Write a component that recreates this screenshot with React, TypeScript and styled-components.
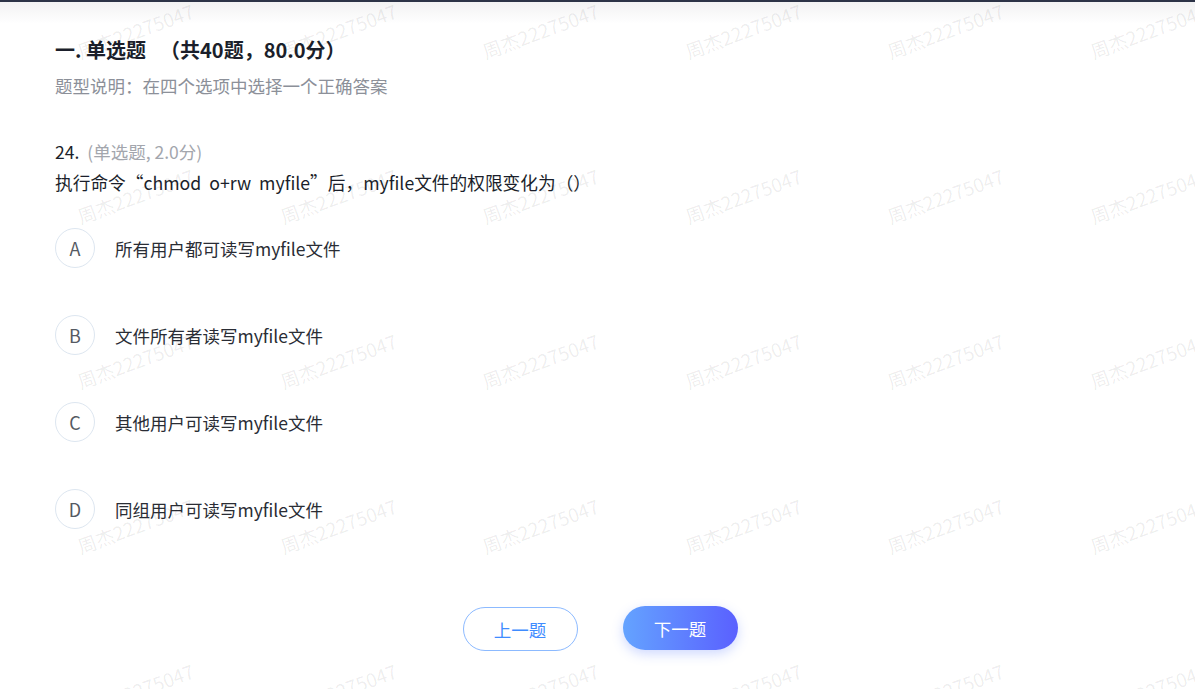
import React from 'react';
import styled, { createGlobalStyle } from 'styled-components';

const GlobalStyle = createGlobalStyle`
    html, body {
        margin: 0;
        padding: 0;
        background: #ffffff;
        font-family: "Noto Sans CJK SC", "Noto Sans", sans-serif;
    }
`;

const Page = styled.div`
    position: relative;
    width: 1195px;
    height: 689px;
    overflow: hidden;
    background: #ffffff;
`;

const TopBar = styled.div`
    height: 2px;
    background: #2c3347;
`;

const TopShade = styled.div`
    height: 22px;
    background: linear-gradient(#f2f2f3, #ffffff);
`;

const Content = styled.main`
    display: flex;
    flex-direction: column;
    padding: 11px 55px 0;
`;

const SectionTitle = styled.h2`
    margin: 0;
    font-size: 20px;
    font-weight: 700;
    line-height: 30px;
    color: #1b1f2b;

    .count {
        margin-left: 14px;
    }
`;

const SectionNote = styled.p`
    margin: 6px 0 0;
    font-size: 17.5px;
    line-height: 30px;
    color: #8c9099;
`;

const QuestionHead = styled.div`
    margin-top: 36px;
    font-size: 17.5px;
    line-height: 30px;
    color: #1b1f2b;

    .meta {
        margin-left: 8px;
        color: #a3a6ad;
    }
`;

const QuestionText = styled.div`
    font-size: 17.7px;
    line-height: 30px;
    color: #1b1f2b;
`;

const Options = styled.ul`
    list-style: none;
    margin: 31px 0 0;
    padding: 0;
    display: flex;
    flex-direction: column;
    gap: 47px;
`;

const OptionRow = styled.li`
    display: flex;
    align-items: center;
    gap: 20px;
    height: 40px;
    font-size: 17.5px;
    color: #2a2d35;
`;

const Letter = styled.span`
    box-sizing: border-box;
    width: 40px;
    height: 40px;
    border-radius: 50%;
    border: 1px solid #dde6f0;
    display: flex;
    align-items: center;
    justify-content: center;
    font-size: 18px;
    color: #555a63;
`;

const Footer = styled.div`
    display: flex;
    justify-content: center;
    gap: 45px;
    margin-top: 78px;
    padding-left: 5px;
`;

const NavButton = styled.button<{ $primary?: boolean }>`
    box-sizing: border-box;
    width: 115px;
    height: 44px;
    border-radius: 22px;
    font-family: inherit;
    font-size: 17.5px;
    cursor: pointer;
    border: ${({ $primary }) => ($primary ? 'none' : '1px solid #8cbaff')};
    color: ${({ $primary }) => ($primary ? '#ffffff' : '#3f8cff')};
    background: ${({ $primary }) =>
        $primary ? 'linear-gradient(90deg, #64a3ff, #5a60ff)' : '#ffffff'};
    box-shadow: ${({ $primary }) =>
        $primary ? '0 4px 12px rgba(96, 130, 255, 0.3)' : 'none'};
    transform: ${({ $primary }) => ($primary ? 'translateY(-1px)' : 'none')};
`;

const WatermarkLayer = styled.div`
    position: absolute;
    top: -52px;
    left: 34px;
    display: grid;
    grid-template-columns: repeat(6, 202.5px);
    grid-auto-rows: 165px;
    pointer-events: none;
`;

const Watermark = styled.span`
    display: flex;
    align-items: center;
    justify-content: center;
    font-family: "Noto Sans CJK SC", "Noto Sans", sans-serif;
    font-size: 19px;
    color: rgba(0, 0, 0, 0.075);
    white-space: nowrap;
    transform: rotate(-20deg);
`;

const options = [
    { key: 'A', text: '所有用户都可读写myfile文件' },
    { key: 'B', text: '文件所有者读写myfile文件' },
    { key: 'C', text: '其他用户可读写myfile文件' },
    { key: 'D', text: '同组用户可读写myfile文件' },
];

export default function App() {
    return (
        <Page>
            <GlobalStyle />
            <TopBar />
            <TopShade />
            <Content>
                <SectionTitle>
                    一. 单选题<span className="count">（共40题，80.0分）</span>
                </SectionTitle>
                <SectionNote>题型说明：在四个选项中选择一个正确答案</SectionNote>
                <QuestionHead>
                    24.<span className="meta">(单选题, 2.0分)</span>
                </QuestionHead>
                <QuestionText>
                    执行命令“chmod&nbsp; o+rw&nbsp; myfile”后，myfile文件的权限变化为（）
                </QuestionText>
                <Options>
                    {options.map((o) => (
                        <OptionRow key={o.key}>
                            <Letter>{o.key}</Letter>
                            {o.text}
                        </OptionRow>
                    ))}
                </Options>
                <Footer>
                    <NavButton>上一题</NavButton>
                    <NavButton $primary>下一题</NavButton>
                </Footer>
            </Content>
            <WatermarkLayer>
                {Array.from({ length: 30 }).map((_, i) => (
                    <Watermark key={i}>周杰22275047</Watermark>
                ))}
            </WatermarkLayer>
        </Page>
    );
}
